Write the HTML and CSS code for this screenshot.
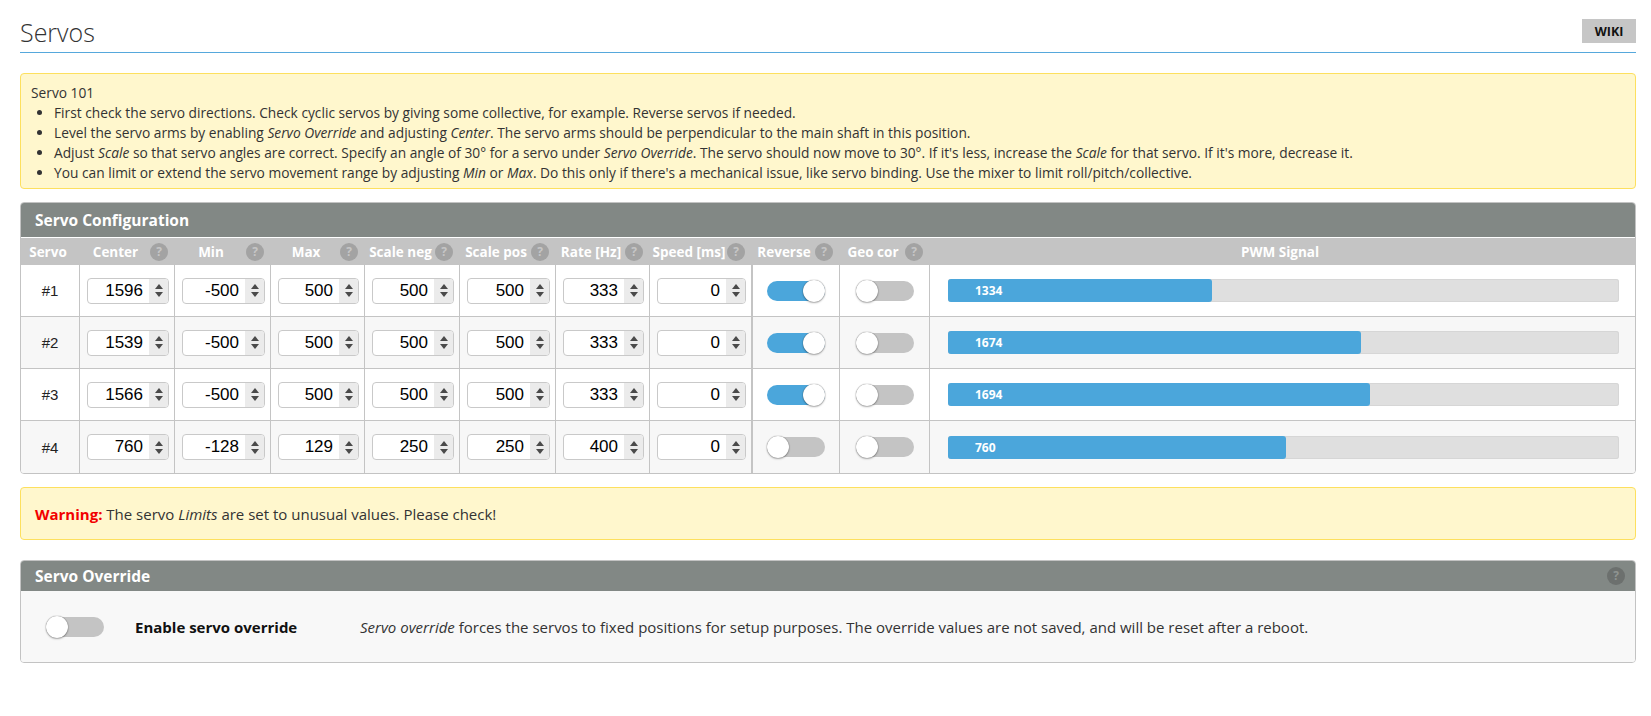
FILE: index.html
```html
<!DOCTYPE html>
<html>
<head>
<meta charset="utf-8">
<title>Servos</title>
<link rel="stylesheet" href="styles.css">
</head>
<body>
<div class="tab">
  <div class="title-bar">
    <h1 class="title">Servos</h1>
    <a class="wiki">WIKI</a>
  </div>

  <div class="note">
    <div>Servo 101</div>
    <ul>
      <li>First check the servo directions. Check cyclic servos by giving some collective, for example. Reverse servos if needed.</li>
      <li>Level the servo arms by enabling <em>Servo Override</em> and adjusting <em>Center</em>. The servo arms should be perpendicular to the main shaft in this position.</li>
      <li>Adjust <em>Scale</em> so that servo angles are correct. Specify an angle of 30° for a servo under <em>Servo Override</em>. The servo should now move to 30°. If it's less, increase the <em>Scale</em> for that servo. If it's more, decrease it.</li>
      <li>You can limit or extend the servo movement range by adjusting <em>Min</em> or <em>Max</em>. Do this only if there's a mechanical issue, like servo binding. Use the mixer to limit roll/pitch/collective.</li>
    </ul>
  </div>

  <div class="panel">
    <div class="panel-head">Servo Configuration</div>
    <table class="servos">
      <colgroup>
        <col class="c-servo"><col class="c-num"><col class="c-num96"><col class="c-num94"><col class="c-num"><col class="c-num96"><col class="c-num94"><col class="c-speed"><col class="c-rev"><col class="c-geo"><col>
      </colgroup>
      <thead>
        <tr>
          <th><div class="hc"><span class="ht">Servo</span></div></th>
          <th><div class="hc"><span class="ht">Center</span><span class="q">?</span></div></th>
          <th><div class="hc"><span class="ht">Min</span><span class="q">?</span></div></th>
          <th><div class="hc"><span class="ht">Max</span><span class="q">?</span></div></th>
          <th><div class="hc"><span class="ht">Scale neg</span><span class="q">?</span></div></th>
          <th><div class="hc"><span class="ht">Scale pos</span><span class="q">?</span></div></th>
          <th><div class="hc"><span class="ht">Rate [Hz]</span><span class="q">?</span></div></th>
          <th><div class="hc"><span class="ht">Speed [ms]</span><span class="q">?</span></div></th>
          <th><div class="hc"><span class="ht">Reverse</span><span class="q">?</span></div></th>
          <th><div class="hc"><span class="ht">Geo cor</span><span class="q">?</span></div></th>
          <th><div class="hc"><span class="ht">PWM Signal</span></div></th>
        </tr>
      </thead>
      <tbody>
        <tr>
          <td class="name">#1</td>
          <td class="in"><div class="num"><span class="val">1596</span><span class="spin"><i class="up"></i><i class="down"></i></span></div></td>
          <td class="in"><div class="num"><span class="val">-500</span><span class="spin"><i class="up"></i><i class="down"></i></span></div></td>
          <td class="in"><div class="num"><span class="val">500</span><span class="spin"><i class="up"></i><i class="down"></i></span></div></td>
          <td class="in"><div class="num"><span class="val">500</span><span class="spin"><i class="up"></i><i class="down"></i></span></div></td>
          <td class="in"><div class="num"><span class="val">500</span><span class="spin"><i class="up"></i><i class="down"></i></span></div></td>
          <td class="in"><div class="num"><span class="val">333</span><span class="spin"><i class="up"></i><i class="down"></i></span></div></td>
          <td class="in"><div class="num"><span class="val">0</span><span class="spin"><i class="up"></i><i class="down"></i></span></div></td>
          <td class="rev"><div class="switch on"></div></td>
          <td class="geo"><div class="switch"></div></td>
          <td class="pwm"><div class="bar"><div class="fill" style="width:39.3%">1334</div></div></td>
        </tr>
        <tr>
          <td class="name">#2</td>
          <td class="in"><div class="num"><span class="val">1539</span><span class="spin"><i class="up"></i><i class="down"></i></span></div></td>
          <td class="in"><div class="num"><span class="val">-500</span><span class="spin"><i class="up"></i><i class="down"></i></span></div></td>
          <td class="in"><div class="num"><span class="val">500</span><span class="spin"><i class="up"></i><i class="down"></i></span></div></td>
          <td class="in"><div class="num"><span class="val">500</span><span class="spin"><i class="up"></i><i class="down"></i></span></div></td>
          <td class="in"><div class="num"><span class="val">500</span><span class="spin"><i class="up"></i><i class="down"></i></span></div></td>
          <td class="in"><div class="num"><span class="val">333</span><span class="spin"><i class="up"></i><i class="down"></i></span></div></td>
          <td class="in"><div class="num"><span class="val">0</span><span class="spin"><i class="up"></i><i class="down"></i></span></div></td>
          <td class="rev"><div class="switch on"></div></td>
          <td class="geo"><div class="switch"></div></td>
          <td class="pwm"><div class="bar"><div class="fill" style="width:61.6%">1674</div></div></td>
        </tr>
        <tr>
          <td class="name">#3</td>
          <td class="in"><div class="num"><span class="val">1566</span><span class="spin"><i class="up"></i><i class="down"></i></span></div></td>
          <td class="in"><div class="num"><span class="val">-500</span><span class="spin"><i class="up"></i><i class="down"></i></span></div></td>
          <td class="in"><div class="num"><span class="val">500</span><span class="spin"><i class="up"></i><i class="down"></i></span></div></td>
          <td class="in"><div class="num"><span class="val">500</span><span class="spin"><i class="up"></i><i class="down"></i></span></div></td>
          <td class="in"><div class="num"><span class="val">500</span><span class="spin"><i class="up"></i><i class="down"></i></span></div></td>
          <td class="in"><div class="num"><span class="val">333</span><span class="spin"><i class="up"></i><i class="down"></i></span></div></td>
          <td class="in"><div class="num"><span class="val">0</span><span class="spin"><i class="up"></i><i class="down"></i></span></div></td>
          <td class="rev"><div class="switch on"></div></td>
          <td class="geo"><div class="switch"></div></td>
          <td class="pwm"><div class="bar"><div class="fill" style="width:62.9%">1694</div></div></td>
        </tr>
        <tr>
          <td class="name">#4</td>
          <td class="in"><div class="num"><span class="val">760</span><span class="spin"><i class="up"></i><i class="down"></i></span></div></td>
          <td class="in"><div class="num"><span class="val">-128</span><span class="spin"><i class="up"></i><i class="down"></i></span></div></td>
          <td class="in"><div class="num"><span class="val">129</span><span class="spin"><i class="up"></i><i class="down"></i></span></div></td>
          <td class="in"><div class="num"><span class="val">250</span><span class="spin"><i class="up"></i><i class="down"></i></span></div></td>
          <td class="in"><div class="num"><span class="val">250</span><span class="spin"><i class="up"></i><i class="down"></i></span></div></td>
          <td class="in"><div class="num"><span class="val">400</span><span class="spin"><i class="up"></i><i class="down"></i></span></div></td>
          <td class="in"><div class="num"><span class="val">0</span><span class="spin"><i class="up"></i><i class="down"></i></span></div></td>
          <td class="rev"><div class="switch"></div></td>
          <td class="geo"><div class="switch"></div></td>
          <td class="pwm"><div class="bar"><div class="fill" style="width:50.4%">760</div></div></td>
        </tr>
      </tbody>
    </table>
  </div>

  <div class="warn"><b>Warning:</b>&nbsp;The servo&nbsp;<em>Limits</em>&nbsp;are set to unusual values. Please check!</div>

  <div class="panel override">
    <div class="panel-head small"><span class="head-text">Servo Override</span><span class="q dark">?</span></div>
    <div class="override-body">
      <div class="switch"></div>
      <div class="ov-label">Enable servo override</div>
      <div class="ov-desc"><em>Servo override</em> forces the servos to fixed positions for setup purposes. The override values are not saved, and will be reset after a reboot.</div>
    </div>
  </div>
</div>
</body>
</html>
```

FILE: styles.css
```css
* { box-sizing: border-box; }

body {
  margin: 0;
  font-family: "Open Sans", "Liberation Sans", sans-serif;
  color: #333;
  background: #fff;
}

.tab {
  padding: 0 15px 0 20px;
}

/* Title */
.title-bar {
  display: flex;
  justify-content: space-between;
  align-items: flex-start;
  height: 53px;
  border-bottom: 1px solid #56a8dc;
}

.title {
  margin: 14px 0 0;
  font-size: 25px;
  font-weight: 300;
  line-height: 36px;
  color: #333;
}

.wiki {
  margin-top: 19px;
  width: 54px;
  height: 24px;
  background: #c6c6c6;
  color: #111;
  font-size: 12.5px;
  font-weight: 700;
  display: flex;
  align-items: center;
  justify-content: center;
}

/* Notes */
.note {
  margin-top: 20px;
  background: #fff7cd;
  border: 1px solid #fde05e;
  border-radius: 4px;
  padding: 9px 10px 5px;
  font-size: 13.75px;
  line-height: 20px;
}

.note ul {
  margin: 0;
  padding-left: 23px;
}

/* Panels */
.panel {
  margin-top: 13px;
  border: 1px solid #c3c3c3;
  border-radius: 4px;
  overflow: hidden;
}

.panel-head {
  height: 35px;
  background: #828885;
  border-bottom: 1px solid #fff;
  color: #fff;
  font-size: 15.5px;
  font-weight: 700;
  padding-left: 14px;
  display: flex;
  align-items: center;
}

/* Table */
.servos {
  width: 100%;
  border-spacing: 0;
  table-layout: fixed;
}

.c-servo { width: 58px; }
.c-num { width: 95px; }
.c-num96 { width: 96px; }
.c-num94 { width: 94px; }
.c-speed { width: 102px; }
.c-rev { width: 88px; }
.c-geo { width: 90px; }

.servos th {
  height: 27px;
  background: #c4c4c4;
  color: #fff;
  font-size: 13.5px;
  font-weight: 700;
  padding: 0 6px 0 2px;
}

.hc {
  display: flex;
  align-items: center;
}

.ht {
  flex: 1;
  text-align: center;
  white-space: nowrap;
}

.q {
  flex: none;
  width: 18px;
  height: 18px;
  border-radius: 50%;
  background: #a3a3a3;
  color: #c6c6c6;
  font-size: 12px;
  font-weight: 700;
  line-height: 18px;
  text-align: center;
}

.servos td {
  height: 52px;
  border-bottom: 1px solid #c4c4c4;
  border-left: 1px solid #c4c4c4;
  vertical-align: middle;
}

.servos td:first-child { border-left: none; }
.servos tr:last-child td { border-bottom: none; }
.servos tbody tr:nth-child(even) td { background: #f7f7f7; }

.servos td.name {
  text-align: center;
  font-family: "Liberation Sans", Arial, sans-serif;
  font-size: 15px;
  color: #222;
}

.servos td.in {
  padding: 0 5px 0 7px;
}

.servos td.rev {
  border-left: 2px solid #c4c4c4;
}

/* Number inputs */
.num {
  display: flex;
  height: 26px;
  border: 1px solid #c9c9c9;
  border-radius: 4px;
  background: #fff;
  overflow: hidden;
}

.val {
  flex: 1;
  text-align: right;
  padding-right: 6px;
  font-family: "Liberation Sans", Arial, sans-serif;
  font-size: 17px;
  line-height: 24px;
  color: #000;
}

.spin {
  width: 19px;
  background: #ebebeb;
  display: flex;
  flex-direction: column;
  align-items: center;
  justify-content: center;
  gap: 3px;
}

.up {
  display: block;
  width: 0;
  height: 0;
  border-left: 4.5px solid transparent;
  border-right: 4.5px solid transparent;
  border-bottom: 5px solid #4a4a4a;
}

.down {
  display: block;
  width: 0;
  height: 0;
  border-left: 4.5px solid transparent;
  border-right: 4.5px solid transparent;
  border-top: 5px solid #4a4a4a;
}

/* Switches */
.switch {
  position: relative;
  width: 58px;
  height: 20px;
  border-radius: 10px;
  background: #c4c4c4;
  margin: 0 auto;
}

.switch::after {
  content: "";
  position: absolute;
  top: -1px;
  left: 0;
  width: 22px;
  height: 22px;
  border-radius: 50%;
  background: #fff;
  box-shadow: 0 0 1px rgba(0, 0, 0, 0.6), 0 1px 2px rgba(0, 0, 0, 0.3);
}

.switch.on { background: #4ba6db; }
.switch.on::after { left: auto; right: 0; }

/* PWM bars */
.servos td.pwm {
  padding: 0 16px 0 18px;
}

.bar {
  height: 23px;
  background: #dfdfdf;
  border-radius: 3px;
  box-shadow: inset 0 0 0 1px #d6d6d6;
}

.fill {
  height: 100%;
  background: #4ba6db;
  border-radius: 3px;
  padding-left: 27px;
  color: #fff;
  font-size: 12px;
  font-weight: 700;
  line-height: 23px;
  white-space: nowrap;
}

/* Warning */
.warn {
  margin-top: 13px;
  height: 53px;
  background: #fff7cd;
  border: 1px solid #fde05e;
  border-radius: 4px;
  padding: 0 14px;
  display: flex;
  align-items: center;
  font-size: 15px;
}

.warn b { color: #f20000; }

/* Override */
.override { margin-top: 20px; }

.panel-head.small {
  height: 30px;
  border-bottom: none;
  justify-content: space-between;
  padding-right: 10px;
}

.q.dark {
  background: #6c706e;
  color: #8f9491;
}

.override-body {
  height: 71px;
  background: #f8f8f8;
  display: flex;
  align-items: center;
  padding-left: 25px;
  font-size: 15px;
}

.override-body .switch {
  margin: 0;
  flex: none;
}

.ov-label {
  margin-left: 31px;
  width: 225px;
  font-weight: 700;
  color: #111;
}

.ov-desc {
  color: #333;
}
```
